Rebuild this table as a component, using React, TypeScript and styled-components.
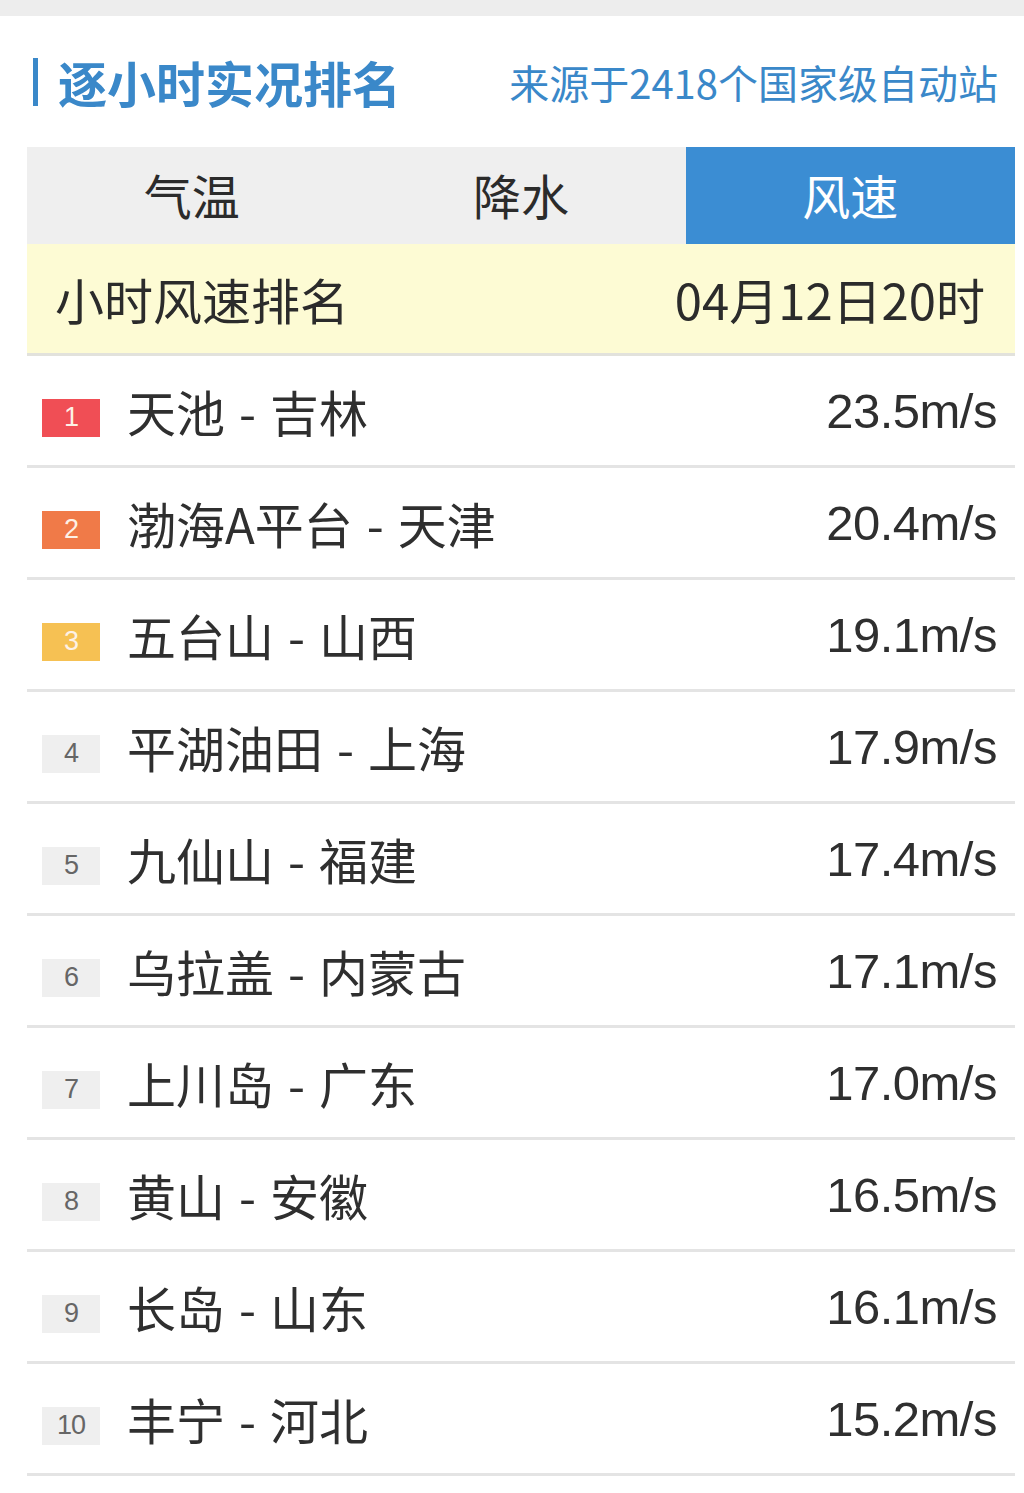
import React from 'react';
import styled, { createGlobalStyle } from 'styled-components';

const GlobalStyle = createGlobalStyle`
  body {
    margin: 0;
    background: #fff;
    font-family: "Noto Sans CJK SC", "Noto Sans", sans-serif;
  }
`;

const TopStrip = styled.div`
  height: 16px;
  background: #ededed;
`;

const Page = styled.div`
  padding: 0 9px 0 27px;
`;

const Header = styled.div`
  height: 131px;
  display: flex;
  align-items: center;
  justify-content: space-between;
  padding: 0 17px 0 6px;
`;

const Title = styled.h1`
  margin: 0;
  display: flex;
  align-items: center;
  gap: 20px;
  font-size: 49px;
  font-weight: 700;
  color: #3a88c9;
  line-height: 1;
  &::before {
    content: '';
    display: block;
    width: 5px;
    height: 48px;
    background: #3a88c9;
  }
`;

const Source = styled.div`
  font-size: 40px;
  color: #3a88c9;
`;

const Tabs = styled.div`
  display: grid;
  grid-template-columns: 1fr 1fr 1fr;
  height: 97px;
  background: #efefef;
`;

const Tab = styled.div<{ active?: boolean }>`
  display: flex;
  align-items: center;
  justify-content: center;
  padding-bottom: 4px;
  font-size: 48px;
  color: ${(props) => (props.active ? '#fff' : '#2b2b2b')};
  background: ${(props) => (props.active ? '#3b8dd3' : 'transparent')};
`;

const SubHeader = styled.div`
  height: 109px;
  display: flex;
  align-items: center;
  justify-content: space-between;
  padding: 0 30px 0 28px;
  background: #fdfbd4;
  border-bottom: 3px solid #e2e2dc;
  font-size: 49px;
  color: #2b2b2b;
`;

const Row = styled.div`
  height: 109px;
  display: flex;
  align-items: center;
  padding: 0 18px 0 15px;
  border-bottom: 3px solid #e4e4e4;
`;

const Badge = styled.span<{ color: string; light?: boolean }>`
  flex-shrink: 0;
  width: 58px;
  height: 38px;
  margin-top: 14px;
  display: flex;
  align-items: center;
  justify-content: center;
  background: ${(props) => props.color};
  color: ${(props) => (props.light ? '#666' : '#fdf1e6')};
  font-family: "Liberation Sans", Arial, sans-serif;
  font-size: 27px;
  letter-spacing: -1px;
`;

const Name = styled.span`
  margin-left: 27px;
  font-size: 49px;
  word-spacing: 3px;
  color: #2f2f2f;
  flex: 1;
`;

const Value = styled.span`
  font-family: "Liberation Sans", Arial, sans-serif;
  font-size: 49px;
  letter-spacing: -0.5px;
  color: #2f2f2f;
`;

const rows = [
  { name: '天池 - 吉林', value: '23.5m/s' },
  { name: '渤海A平台 - 天津', value: '20.4m/s' },
  { name: '五台山 - 山西', value: '19.1m/s' },
  { name: '平湖油田 - 上海', value: '17.9m/s' },
  { name: '九仙山 - 福建', value: '17.4m/s' },
  { name: '乌拉盖 - 内蒙古', value: '17.1m/s' },
  { name: '上川岛 - 广东', value: '17.0m/s' },
  { name: '黄山 - 安徽', value: '16.5m/s' },
  { name: '长岛 - 山东', value: '16.1m/s' },
  { name: '丰宁 - 河北', value: '15.2m/s' },
];

const badgeColors = ['#f04e55', '#f07a48', '#f6c153'];

const App = () => {
  return (
    <>
      <GlobalStyle />
      <TopStrip />
      <Page>
        <Header>
          <Title>逐小时实况排名</Title>
          <Source>来源于2418个国家级自动站</Source>
        </Header>
        <Tabs>
          <Tab>气温</Tab>
          <Tab>降水</Tab>
          <Tab active>风速</Tab>
        </Tabs>
        <SubHeader>
          <span>小时风速排名</span>
          <span>04月12日20时</span>
        </SubHeader>
        {rows.map((row, i) => (
          <Row key={i}>
            <Badge
              color={badgeColors[i] || '#efefef'}
              light={i > 2}
            >
              {i + 1}
            </Badge>
            <Name>{row.name}</Name>
            <Value>{row.value}</Value>
          </Row>
        ))}
      </Page>
    </>
  );
};

export default App;
